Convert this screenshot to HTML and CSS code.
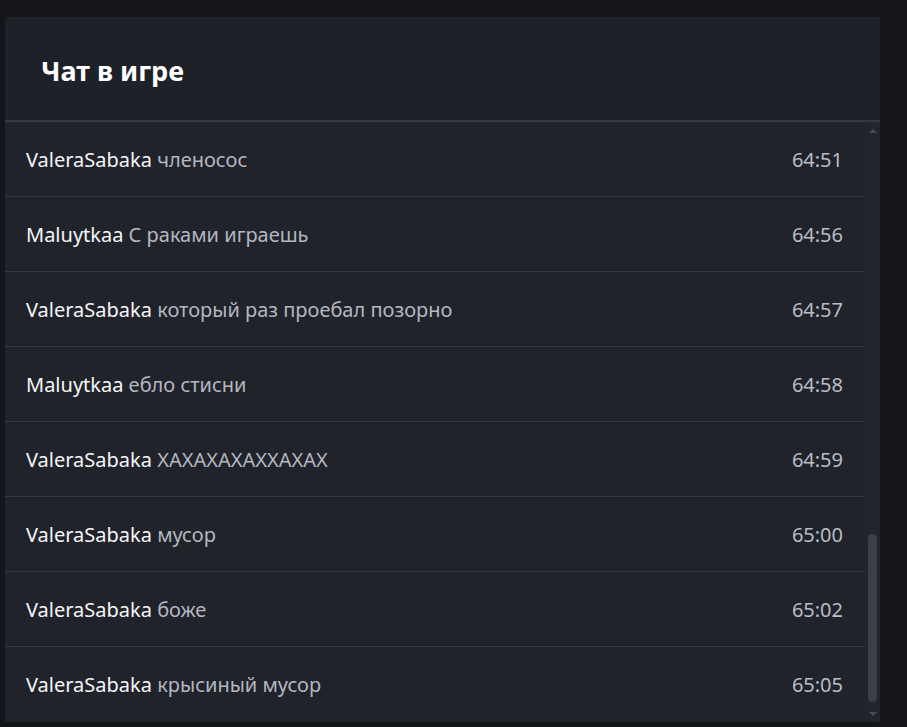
FILE: index.html
```html
<!DOCTYPE html>
<html lang="ru">
<head>
<meta charset="utf-8">
<link rel="stylesheet" href="styles.css">
</head>
<body>
<div class="panel">
  <div class="header"><h1 class="title">Чат в игре</h1></div>
  <div class="body">
    <div class="list">
      <div class="row"><span class="msg"><span class="name">ValeraSabaka</span> членосос</span><span class="time">64:51</span></div>
      <div class="row"><span class="msg"><span class="name">Maluytkaa</span> С раками играешь</span><span class="time">64:56</span></div>
      <div class="row"><span class="msg"><span class="name">ValeraSabaka</span> который раз проебал позорно</span><span class="time">64:57</span></div>
      <div class="row"><span class="msg"><span class="name">Maluytkaa</span> ебло стисни</span><span class="time">64:58</span></div>
      <div class="row"><span class="msg"><span class="name">ValeraSabaka</span> ХАХАХАХАХХАХАХ</span><span class="time">64:59</span></div>
      <div class="row"><span class="msg"><span class="name">ValeraSabaka</span> мусор</span><span class="time">65:00</span></div>
      <div class="row"><span class="msg"><span class="name">ValeraSabaka</span> боже</span><span class="time">65:02</span></div>
      <div class="row last"><span class="msg"><span class="name">ValeraSabaka</span> крысиный мусор</span><span class="time">65:05</span></div>
    </div>
    <div class="scrollbar">
      <div class="arrow up"></div>
      <div class="track"><div class="thumb"></div></div>
      <div class="arrow down"></div>
    </div>
  </div>
</div>
</body>
</html>
```
FILE: styles.css
```css
* { box-sizing: border-box; }
html, body { margin: 0; padding: 0; }
body {
  background: #141519;
  font-family: "Noto Sans", "Open Sans", sans-serif;
  height: 727px;
  overflow: hidden;
}
.panel {
  margin: 17px 0 0 5px;
  width: 875px;
  background: #1f2129;
}
.header {
  height: 105px;
  border-bottom: 2px solid #363842;
  display: flex;
  align-items: center;
  padding-left: 36px;
}
.title {
  margin: 0;
  font-size: 27px;
  font-weight: 700;
  color: #ffffff;
  line-height: 1;
  padding-top: 4px;
}
.body {
  display: flex;
  background: #21232a;
}
.list { flex: 1; }
.row {
  height: 75px;
  display: flex;
  align-items: center;
  justify-content: space-between;
  padding: 0 22px 0 21px;
  border-bottom: 1px solid #353741;
  font-size: 20px;
}
.row.last { border-bottom: none; }
.msg { color: #b3b7c0; }
.name { color: #f4f5f7; }
.time { color: #b8bcc4; }
.scrollbar {
  width: 15px;
  display: flex;
  flex-direction: column;
  background: #23252d;
}
.arrow { height: 17px; display: flex; justify-content: center; align-items: center; }
.arrow.up::before {
  content: "";
  border-left: 4px solid transparent;
  border-right: 4px solid transparent;
  border-bottom: 4px solid #4a4c55;
}
.arrow.down::before {
  content: "";
  border-left: 4px solid transparent;
  border-right: 4px solid transparent;
  border-top: 4px solid #4a4c55;
}
.track {
  flex: 1;
  display: flex;
  flex-direction: column;
  justify-content: flex-end;
  padding: 0 3px 3px;
}
.thumb {
  height: 168px;
  border-radius: 5px;
  background: #3d3f48;
}
```
